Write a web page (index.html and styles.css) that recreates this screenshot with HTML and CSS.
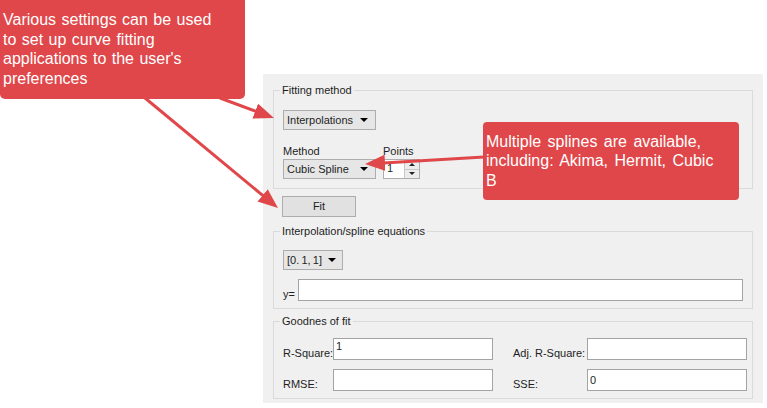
FILE: index.html
```html
<!DOCTYPE html>
<html>
<head>
<meta charset="utf-8">
<link rel="stylesheet" href="styles.css">
</head>
<body>
<div class="panel">
  <fieldset class="group g1">
    <legend>Fitting method</legend>
    <div class="combo w93">Interpolations<span class="caret"></span></div>
    <div class="row2">
      <div class="field">
        <div class="lbl">Method</div>
        <div class="combo w93">Cubic Spline<span class="caret"></span></div>
      </div>
      <div class="field">
        <div class="lbl">Points</div>
        <div class="spin">
          <span class="spin-val">1</span>
          <span class="spin-btns"><span class="up"></span><span class="down"></span></span>
        </div>
      </div>
    </div>
  </fieldset>
  <div class="btn">Fit</div>
  <fieldset class="group g2">
    <legend>Interpolation/spline equations</legend>
    <div class="combo w60">[0.&thinsp;1,&thinsp;1]<span class="caret"></span></div>
    <div class="eqrow">
      <div class="lbl ylbl">y=</div>
      <div class="tbox eq"></div>
    </div>
  </fieldset>
  <fieldset class="group g3">
    <legend>Goodnes of fit</legend>
    <div class="gof">
      <div class="lbl">R-Square:</div>
      <div class="tbox r1">1</div>
      <div class="lbl pad">Adj. R-Square:</div>
      <div class="tbox r1"></div>
      <div class="lbl">RMSE:</div>
      <div class="tbox r2"></div>
      <div class="lbl pad">SSE:</div>
      <div class="tbox r2 mid">0</div>
    </div>
  </fieldset>
</div>

<div class="callout c1">Various settings can be used<br>to set up curve fitting<br>applications to the user's<br>preferences</div>
<div class="callout c2">Multiple splines are available,<br>including: Akima, Hermit, Cubic<br>B</div>

<svg class="arrows" width="767" height="408" viewBox="0 0 767 408">
  <defs>
    <marker id="ah" markerUnits="userSpaceOnUse" markerWidth="22" markerHeight="18" refX="10" refY="8" orient="auto">
      <path d="M0,0 L20,8 L0,16 Z" fill="#e0474a"/>
    </marker>
  </defs>
  <line x1="220" y1="98" x2="264.6" y2="114.6" stroke="#e0474a" stroke-width="3" marker-end="url(#ah)"/>
  <line x1="145" y1="98" x2="270.3" y2="201.7" stroke="#e0474a" stroke-width="3" marker-end="url(#ah)"/>
  <line x1="484" y1="157" x2="375" y2="163.4" stroke="#e0474a" stroke-width="3" marker-end="url(#ah)"/>
</svg>
</body>
</html>
```
FILE: styles.css
```css
* { box-sizing: border-box; }
html, body { margin: 0; padding: 0; }
body {
  width: 767px;
  height: 408px;
  background: #ffffff;
  position: relative;
  overflow: hidden;
  font-family: "Liberation Sans", Arial, sans-serif;
}

.panel {
  margin: 74px 0 0 263px;
  width: 500px;
  height: 329px;
  background: #f0f0f0;
  padding: 10px 10px 4px 10px;
  display: flex;
  flex-direction: column;
  align-items: flex-start;
  font-size: 11px;
  line-height: 13px;
  color: #1e1e1e;
}

.group {
  margin: 0;
  width: 480px;
  min-width: 0;
  border: 1px solid #dadada;
}
.group legend {
  font-size: 11px;
  line-height: 12px;
  padding: 0 2px;
  margin-left: -3px;
}
.g1 { padding: 14px 4px 9px 9px; }
.g2 { margin-top: 8px; padding: 13px 4px 7px 9px; }
.g3 { margin-top: 6px; padding: 11px 4px 7px 9px; }

.lbl { line-height: 13px; white-space: nowrap; }

.combo {
  height: 20px;
  border: 1px solid #adadad;
  background: #e6e6e6;
  display: flex;
  align-items: center;
  justify-content: space-between;
  padding: 0 7px 0 3px;
  white-space: nowrap;
}
.w93 { width: 93px; }
.w60 { width: 60px; padding-right: 6px; }
.caret {
  width: 0;
  height: 0;
  border-left: 4px solid transparent;
  border-right: 4px solid transparent;
  border-top: 4px solid #000;
}

.row2 {
  display: flex;
  gap: 7px;
  margin-top: 15px;
}
.field .lbl { margin-bottom: 1px; }

.spin {
  width: 37px;
  height: 20px;
  border: 1px solid #adadad;
  background: #fff;
  display: flex;
}
.spin-val {
  flex: 1;
  padding: 2px 0 0 3px;
  line-height: 13px;
}
.spin-btns {
  width: 15px;
  display: flex;
  flex-direction: column;
  border-left: 1px solid #c8c8c8;
  background: #ececec;
}
.spin-btns span {
  flex: 1;
  display: flex;
  align-items: center;
  justify-content: center;
}
.spin-btns .up { border-bottom: 1px solid #c8c8c8; }
.spin-btns .up::after {
  content: "";
  border-left: 3px solid transparent;
  border-right: 3px solid transparent;
  border-bottom: 3px solid #222;
}
.spin-btns .down::after {
  content: "";
  border-left: 3px solid transparent;
  border-right: 3px solid transparent;
  border-top: 3px solid #222;
}

.btn {
  margin: 7px 0 0 9px;
  width: 74px;
  height: 21px;
  border: 1px solid #adadad;
  background: #e1e1e1;
  display: flex;
  align-items: center;
  justify-content: center;
}

.tbox {
  background: #fff;
  border: 1px solid #a3a3a3;
  padding: 1px 2px;
  line-height: 13px;
}

.eqrow {
  display: flex;
  align-items: flex-end;
  margin-top: 9px;
}
.ylbl { width: 15px; }
.eq { width: 445px; height: 22px; }

.gof {
  display: grid;
  grid-template-columns: 50px 160px 94px 160px;
  row-gap: 9px;
  align-items: end;
}
.gof .pad { padding-left: 20px; }
.r1 { height: 22px; }
.r2 { height: 22px; }
.mid { padding-top: 4px; }

.callout {
  position: absolute;
  background: #e0474a;
  color: #ffffff;
  font-family: "Liberation Sans", Arial, sans-serif;
  font-size: 16px;
  white-space: nowrap;
}
.c1 {
  left: 0;
  top: 0;
  width: 245px;
  height: 99px;
  padding: 10px 0 0 3px;
  line-height: 19.5px;
  word-spacing: 1px;
  border-radius: 0 0 5px 5px;
}
.c2 {
  left: 483px;
  top: 122px;
  width: 256px;
  height: 78px;
  padding: 10px 0 0 3px;
  line-height: 19.3px;
  word-spacing: 2px;
  border-radius: 4px;
}

.arrows {
  position: absolute;
  left: 0;
  top: 0;
  pointer-events: none;
}
```
